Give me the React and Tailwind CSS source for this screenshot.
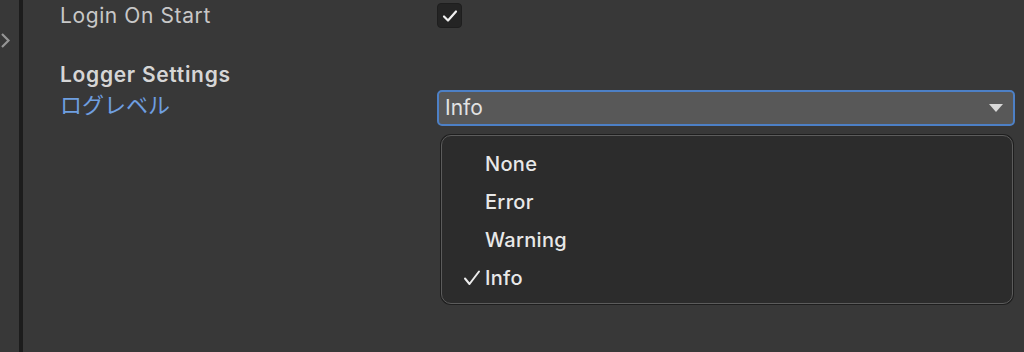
import React from "react";

export default function App() {
  const items = ["None", "Error", "Warning", "Info"];
  return (
    <div className="w-[1024px] h-[352px] bg-[#383838] flex overflow-hidden" style={{ fontFamily: "Inter, 'Noto Sans CJK JP', sans-serif" }}>
      <div className="w-[19px] shrink-0 flex flex-col items-start pt-[32px]">
        <svg width="11" height="17" viewBox="0 0 11 17">
          <path d="M2 2 L8.5 8.5 L2 15" fill="none" stroke="#959595" strokeWidth="2.2" />
        </svg>
      </div>
      <div className="w-[4px] shrink-0 bg-[#1c1c1c]" />
      <div className="flex-1 relative pl-[37px] pr-[9px]">
        <div className="flex items-center h-[31px]">
          <div className="w-[377px] text-[21px] leading-[24px] text-[#c8c8c8] tracking-[0.6px] pt-[1px]">Login On Start</div>
          <div className="w-[25px] h-[25px] rounded-[4px] bg-[#242424] border border-[#1e1e1e] flex items-center justify-center">
            <svg width="16" height="14" viewBox="0 0 16 14">
              <path d="M2 7.5 L6 11.5 L14 2.5" fill="none" stroke="#f0f0f0" strokeWidth="2.2" strokeLinecap="round" strokeLinejoin="round" />
            </svg>
          </div>
        </div>
        <div className="mt-[32px] text-[21px] font-semibold text-[#d6d6d6] leading-[24px] tracking-[0.7px]">Logger Settings</div>
        <div className="flex items-center mt-[3px] h-[36px]">
          <div className="w-[377px] text-[22px] leading-[26px] text-[#6f9fe0] self-start pt-[2px]">ログレベル</div>
          <div className="flex-1 h-[36px] rounded-[5px] border-2 border-[#4d80c6] bg-[#585858] flex items-center justify-between pl-[6px] pr-[10px]">
            <span className="text-[21px] text-[#e2e2e2]">Info</span>
            <svg width="14" height="9" viewBox="0 0 14 9">
              <path d="M0 0 H14 L7 8 Z" fill="#d8d8d8" />
            </svg>
          </div>
        </div>
        <div className="absolute left-[418px] top-[135px] w-[572px] h-[169px] rounded-[10px] border border-[#5c5c5c] bg-[#2c2c2c] shadow-[0_0_0_1px_#1e1e1e] pt-[9px]">
          {items.map((it) => (
            <div key={it} className="h-[38px] flex items-center relative pl-[43px]">
              {it === "Info" && (
                <svg className="absolute left-[21px]" width="18" height="16" viewBox="0 0 18 16">
                  <path d="M2 8.5 L6.5 14 L16 1.5" fill="none" stroke="#ececec" strokeWidth="2" strokeLinecap="round" strokeLinejoin="round" />
                </svg>
              )}
              <span className="text-[20px] font-medium text-[#e8e8e8] tracking-[0.3px]">{it}</span>
            </div>
          ))}
        </div>
      </div>
    </div>
  );
}
